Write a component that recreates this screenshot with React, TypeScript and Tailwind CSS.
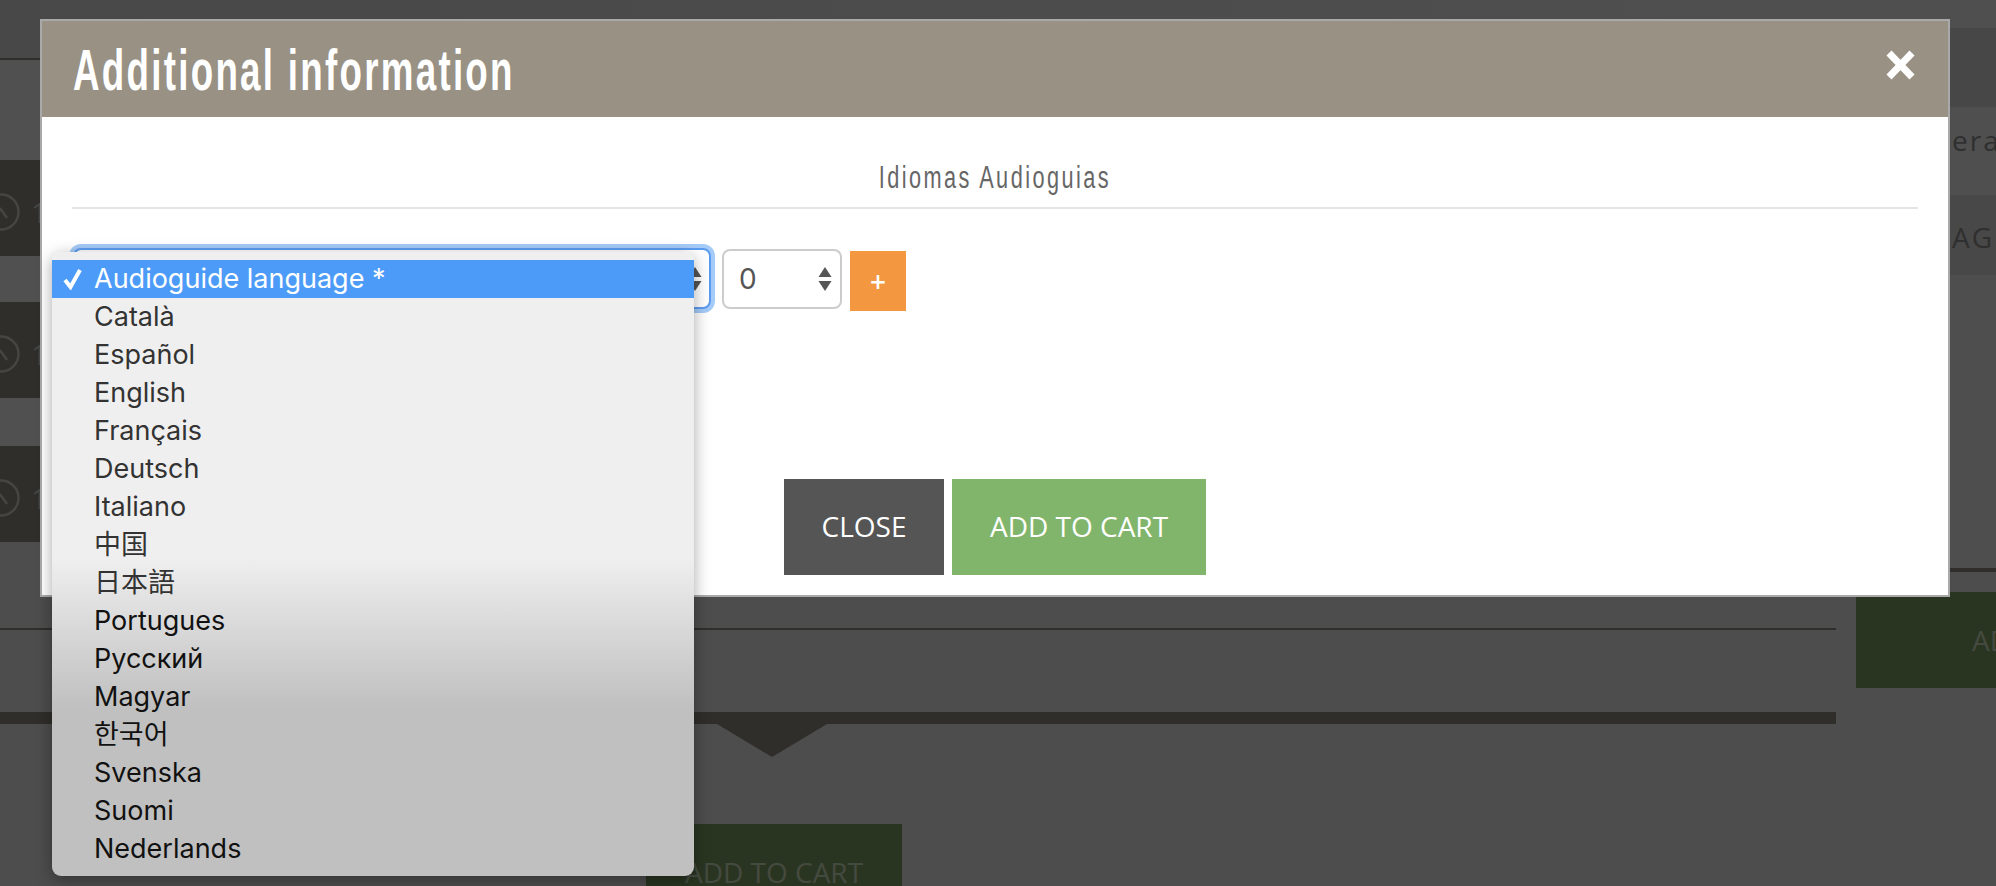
const languages = [
  "Català",
  "Español",
  "English",
  "Français",
  "Deutsch",
  "Italiano",
  "中国",
  "日本語",
  "Portugues",
  "Русский",
  "Magyar",
  "한국어",
  "Svenska",
  "Suomi",
  "Nederlands",
];

const SpinArrows = () => (
  <svg width="14" height="24" viewBox="0 0 14 24" className="shrink-0">
    <path d="M7 0 L13.5 10 H0.5 Z" fill="#555" />
    <path d="M7 24 L13.5 14 H0.5 Z" fill="#555" />
  </svg>
);

const TimeRow = () => (
  <div className="h-[96px] bg-[#2f2e2a] flex items-center">
    <svg width="20" height="40" viewBox="0 0 20 40" className="shrink-0 mt-[8px]">
      <circle cx="1" cy="20" r="17.5" fill="none" stroke="#464641" strokeWidth="2.5" />
      <path d="M0 16 L7 26" fill="none" stroke="#464641" strokeWidth="2.5" />
    </svg>
    <span className="ml-[11px] mt-[8px] text-[28px] text-[#464641] font-['Open_Sans',sans-serif]">1</span>
  </div>
);

const App = () => {
  return (
    <div className="relative w-[1996px] h-[886px] overflow-hidden bg-[#4d4d4d] font-['Open_Sans',sans-serif]">
      {/* page behind the overlay */}
      <div className="flex h-full">
        <div className="w-[1856px] shrink-0 flex flex-col *:shrink-0">
          <div className="h-[58px] bg-linear-to-r from-[#484848] to-[#4f4f4f]" />
          <div className="h-[2px] bg-[#2f2e2a]" />
          <div className="h-[100px] bg-[#505050]" />
          <TimeRow />
          <div className="h-[46px] bg-[#505050]" />
          <TimeRow />
          <div className="h-[48px] bg-[#505050]" />
          <TimeRow />
          <div className="h-[86px]" />
          <div className="h-[2px] w-[1836px] bg-[#2f2e2a]" />
          <div className="h-[82px]" />
          <div className="h-[12px] w-[1836px] bg-[#2f2e2a] relative">
            <svg width="110" height="33" viewBox="0 0 110 33" className="absolute left-[717px] top-[12px]">
              <path d="M0 0 H110 L55 33 Z" fill="#2f2e2a" />
            </svg>
          </div>
          <div className="h-[100px]" />
          <div className="ml-[646px] w-[256px] h-[96px] bg-[#2a3521] flex items-center justify-center text-[28px] text-[#454a40]">
            ADD TO CART
          </div>
        </div>
        <div className="w-[140px] shrink-0 flex flex-col overflow-hidden text-[28px] tracking-[2px] text-[#2f2f2f]">
          <div className="h-[28px] bg-[#4f4f4f]" />
          <div className="h-[79px] bg-[#474747]" />
          <div className="h-[88px] pl-[96px] pb-[22px] bg-[#4f4f4f] flex items-center whitespace-nowrap">era</div>
          <div className="h-[80px] pl-[96px] pt-[4px] bg-[#484848] flex items-center whitespace-nowrap">AGI</div>
          <div className="h-[293px] bg-[#4e4e4e]" />
          <div className="h-[4px] bg-[#2f2e2a]" />
          <div className="h-[20px]" />
          <div className="h-[96px] pl-[116px] bg-[#2a3521] flex items-center whitespace-nowrap tracking-normal text-[#454a40]">
            ADD
          </div>
        </div>
      </div>

      {/* modal */}
      <div className="absolute left-[40px] top-[19px] w-[1910px] h-[578px] border-2 border-[#a9a9a9] bg-white flex flex-col">
        <div className="h-[96px] shrink-0 bg-[#989184] flex items-center justify-between pl-[31px] pr-[32px]">
          <h2 className="origin-left scale-x-[0.645] pt-[3px] text-[57px] font-bold tracking-[3.5px] text-white whitespace-nowrap font-['Liberation_Sans',sans-serif]">
            Additional information
          </h2>
          <svg width="31" height="30" viewBox="0 0 31 30" className="mb-[8px]">
            <path d="M4 3 L27 27 M27 3 L4 27" stroke="#fff" strokeWidth="7" fill="none" />
          </svg>
        </div>
        <div className="px-[30px] flex flex-col">
          <div className="h-[90px] flex items-end justify-center pb-[6px]">
            <span className="scale-x-[0.7] text-[31px] tracking-[3.5px] text-[#666] whitespace-nowrap font-['Liberation_Sans',sans-serif]">
              Idiomas Audioguias
            </span>
          </div>
          <div className="h-[2px] bg-[#e5e5e5]" />
          <div className="flex items-start mt-[39px] ml-[1px]">
            <div className="w-[638px] h-[61px] rounded-[8px] border-2 border-[#5c9cf0] shadow-[0_0_0_4px_#a5cbf8] flex items-center justify-end pr-[7px] bg-white">
              <SpinArrows />
            </div>
            <div className="ml-[11px] w-[120px] h-[60px] mt-[1px] rounded-[8px] border-2 border-[#ccc] flex items-center justify-between pl-[15px] pr-[8px] text-[28px] text-[#555] font-['Inter',sans-serif]">
              0
              <SpinArrows />
            </div>
            <div className="ml-[8px] mt-[3px] w-[56px] h-[60px] bg-[#f39740] flex items-center justify-center text-[28px] font-semibold text-white">
              +
            </div>
          </div>
          <div className="flex justify-center gap-[8px] mt-[168px] text-[28px] text-white">
            <button className="w-[160px] h-[96px] pb-[2px] bg-[#555]">CLOSE</button>
            <button className="w-[254px] h-[96px] pb-[2px] bg-[#81b56b]">ADD TO CART</button>
          </div>
        </div>
      </div>

      {/* open native select list */}
      <div className="absolute left-[52px] top-[252px] w-[642px] h-[624px] pt-[8px] rounded-[9px] bg-linear-to-b from-[#efefef] from-[49%] to-[#c0c0c0] to-[73%] shadow-[0_4px_16px_rgba(0,0,0,0.35)] text-[27px] font-['Inter','Noto_Sans_CJK_SC',sans-serif]">
        <div className="h-[38px] bg-[#4d9bf8] text-white flex items-center relative pl-[42px]">
          <svg width="22" height="22" viewBox="0 0 22 22" className="absolute left-[10px] top-[8px]">
            <path d="M3 12 L8.5 19 L18 2" fill="none" stroke="#fff" strokeWidth="4" />
          </svg>
          Audioguide language *
        </div>
        {languages.map((lang, i) => (
          <div key={lang} className={i < 8 ? "h-[38px] flex items-center pl-[42px] text-[#333]" : "h-[38px] flex items-center pl-[42px] text-[#111]"}>
            {lang}
          </div>
        ))}
      </div>
    </div>
  );
};

export default App;
